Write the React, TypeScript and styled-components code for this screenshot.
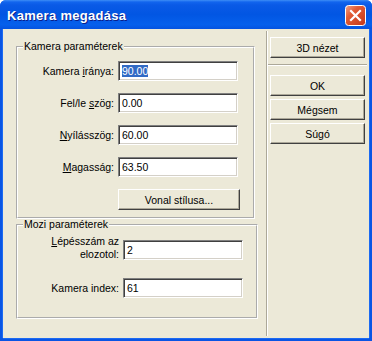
import React, { FC } from "react";
import styled, { createGlobalStyle } from "styled-components";

const GlobalStyle = createGlobalStyle`
	html, body {
		margin: 0;
		padding: 0;
		background: #ffffff;
	}
	body {
		font-family: "Liberation Sans", Arial, sans-serif;
		font-size: 10.5px;
		color: #000;
	}
`;

interface IEditField {
	value: string;
	selected?: boolean;
}

const EditField: FC<IEditField> = ({ value, selected }) => {
	return <Edit>{selected ? <Selected>{value}</Selected> : value}</Edit>;
};

const CloseIcon: FC = () => (
	<svg width="21" height="21" viewBox="0 0 21 21">
		<defs>
			<linearGradient id="cg" x1="0" y1="0" x2="1" y2="1">
				<stop offset="0" stopColor="#f1a48a" />
				<stop offset="0.35" stopColor="#e25c36" />
				<stop offset="1" stopColor="#c1371a" />
			</linearGradient>
		</defs>
		<rect x="0.5" y="0.5" width="20" height="20" rx="3" fill="url(#cg)" stroke="#ffffff" />
		<path d="M6 6 L15 15 M15 6 L6 15" stroke="#ffffff" strokeWidth="2.2" strokeLinecap="square" />
	</svg>
);

const App: FC = () => {
	return (
		<>
			<GlobalStyle />
			<Window>
				<TitleBar>
					<Title>Kamera megadása</Title>
					<CloseButton>
						<CloseIcon />
					</CloseButton>
				</TitleBar>
				<Body>
					<LeftColumn>
						<GroupBox $width={239} $height={179} $pad="8px 15px 0 0">
							<Legend>Kamera paraméterek</Legend>
							<FieldGrid $labelWidth={96} $rowGap={12}>
								<Label>
									Kamera <u>i</u>ránya:
								</Label>
								<EditField value="90.00" selected />
								<Label>
									Fel/le <u>s</u>zög:
								</Label>
								<EditField value="0.00" />
								<Label>
									<u>N</u>yílásszög:
								</Label>
								<EditField value="60.00" />
								<Label>
									<u>M</u>agasság:
								</Label>
								<EditField value="63.50" />
								<span />
								<PushButton $width={122}>Vonal stílusa...</PushButton>
							</FieldGrid>
						</GroupBox>
						<GroupBox $width={242} $height={101} $pad="8px 13px 0 0" $overlap>
							<Legend>Mozi paraméterek</Legend>
							<FieldGrid $labelWidth={101} $rowGap={17}>
								<Label $top>
									<LabelLine>
										<u>L</u>épésszám az
									</LabelLine>
									<LabelLine>elozotol:</LabelLine>
								</Label>
								<EditField value="2" />
								<Label>Kamera index:</Label>
								<EditField value="61" />
							</FieldGrid>
						</GroupBox>
					</LeftColumn>
					<VSeparator />
					<RightColumn>
						<PushButton $width={95}>3D nézet</PushButton>
						<HSeparator />
						<ButtonStack>
							<PushButton $width={95}>OK</PushButton>
							<PushButton $width={95}>Mégsem</PushButton>
							<PushButton $width={95}>Súgó</PushButton>
						</ButtonStack>
					</RightColumn>
				</Body>
			</Window>
		</>
	);
};

export default App;

const Window = styled.div`
	width: 372px;
	height: 341px;
	display: flex;
	flex-direction: column;
	box-sizing: border-box;
	background: #0a55e4;
	border-radius: 6px 6px 0 0;
	overflow: hidden;
`;

const TitleBar = styled.div`
	height: 29px;
	flex: none;
	display: flex;
	align-items: center;
	justify-content: space-between;
	padding: 0 6px 0 7px;
	box-sizing: border-box;
	background: linear-gradient(
		to bottom,
		#3d8ef5 0px,
		#1265ee 2px,
		#0a5ae6 5px,
		#0256e3 50%,
		#0660ec 85%,
		#0553e0 100%
	);
`;

const Title = styled.div`
	font-family: "Liberation Sans", Arial, sans-serif;
	font-weight: bold;
	font-size: 13px;
	letter-spacing: 0.3px;
	color: #ffffff;
	text-shadow: 1px 1px 0 #0a1e8a;
	padding-top: 1px;
`;

const CloseButton = styled.div`
	width: 21px;
	height: 21px;
	display: flex;
	margin-top: 1px;
`;

const Body = styled.div`
	flex: 1;
	display: flex;
	background: #ece9d8;
	margin: 0 3px 3px 3px;
	box-shadow: -1px 0 0 #1c6af2, 1px 0 0 #1c6af2, 0 1px 0 #1c6af2;
`;

const LeftColumn = styled.div`
	width: 263px;
	flex: none;
	padding: 11px 0 0 13px;
	box-sizing: border-box;
	display: flex;
	flex-direction: column;
`;

const GroupBox = styled.fieldset<{
	$width: number;
	$height: number;
	$pad: string;
	$overlap?: boolean;
}>`
	width: ${(p) => p.$width}px;
	height: ${(p) => p.$height}px;
	box-sizing: border-box;
	margin: ${(p) => (p.$overlap ? "-1px 0 0 0" : "0")};
	border: 2px groove #ffffff;
	padding: ${(p) => p.$pad};
	min-width: 0;
`;

const Legend = styled.legend`
	padding: 0 1px;
	margin-left: 5px;
	line-height: 13px;
`;

const FieldGrid = styled.div<{ $labelWidth: number; $rowGap: number }>`
	display: grid;
	grid-template-columns: ${(p) => p.$labelWidth}px 120px;
	column-gap: 4px;
	row-gap: ${(p) => p.$rowGap}px;
	align-items: center;
`;

const Label = styled.div<{ $top?: boolean }>`
	text-align: right;
	line-height: 13px;
	align-self: ${(p) => (p.$top ? "start" : "center")};
	margin-top: ${(p) => (p.$top ? "-4px" : "0")};
	white-space: nowrap;
`;

const LabelLine = styled.div`
	text-align: right;
`;

const Edit = styled.div`
	height: 20px;
	box-sizing: border-box;
	background: #ffffff;
	border-top: 1px solid #808080;
	border-left: 1px solid #808080;
	border-bottom: 1px solid #ffffff;
	border-right: 1px solid #ffffff;
	box-shadow: inset 1px 1px 0 #404040, inset -1px -1px 0 #d4d0c8;
	padding: 0 3px;
	line-height: 18px;
	white-space: nowrap;
	overflow: hidden;
`;

const Selected = styled.span`
	background: #316ac5;
	color: #ffffff;
`;

const PushButton = styled.div<{ $width: number }>`
	width: ${(p) => p.$width}px;
	height: 21px;
	box-sizing: border-box;
	display: flex;
	align-items: center;
	justify-content: center;
	background: #ece9d8;
	border-top: 1px solid #ffffff;
	border-left: 1px solid #ffffff;
	border-right: 1px solid #404040;
	border-bottom: 1px solid #404040;
	box-shadow: inset -1px -1px 0 #aca899;
	white-space: nowrap;
`;

const VSeparator = styled.div`
	width: 0;
	flex: none;
	margin: 2px 0 2px 0;
	border-left: 1px solid #aca899;
	border-right: 1px solid #ffffff;
`;

const RightColumn = styled.div`
	flex: 1;
	display: flex;
	flex-direction: column;
	padding: 8px 0 0 2px;
`;

const HSeparator = styled.div`
	height: 0;
	margin: 6px 2px 9px -2px;
	border-top: 1px solid #aca899;
	border-bottom: 1px solid #ffffff;
`;

const ButtonStack = styled.div`
	display: flex;
	flex-direction: column;
	gap: 3px;
`;
